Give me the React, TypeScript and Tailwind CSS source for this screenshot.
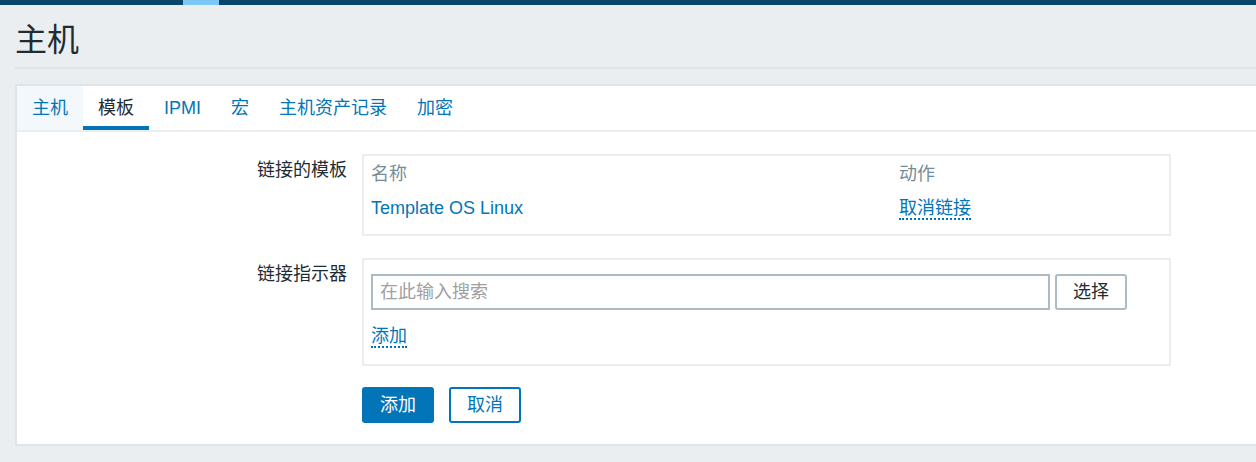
import React from "react";

const FONT = '"Liberation Sans", Arial, "Noto Sans CJK SC", sans-serif';

function Tab({ label, active, first }: { label: string; active?: boolean; first?: boolean }) {
  return (
    <div
      className={
        "h-[44px] px-[15px] flex items-center text-[18px] leading-[22px] " +
        (active
          ? "text-[#1f2c33] border-b-4 border-[#0275b8] pt-[4px]"
          : "text-[#0275b8]") +
        (first ? " bg-[#f3f8fd]" : "")
      }
    >
      {label}
    </div>
  );
}

export default function App() {
  return (
    <div className="w-[1256px] h-[462px] bg-[#ebeef0] overflow-hidden" style={{ fontFamily: FONT }}>
      <div className="h-[5px] bg-[#0a466a] flex">
        <div className="ml-[183px] w-[36px] h-full bg-[#7cc7f5]" />
      </div>
      <div className="ml-[15px] border-b-2 border-[#dfe4e7] pt-[19px] pb-[11px]">
        <h1 className="text-[32px] leading-[32px] text-[#1f2c33] font-normal">主机</h1>
      </div>
      <div className="mt-[15px] ml-[15px] border-2 border-r-0 border-[#dfe4e7] bg-white">
        <div className="flex border-b-2 border-[#ebeef0]">
          <Tab label="主机" first />
          <Tab label="模板" active />
          <Tab label="IPMI" />
          <Tab label="宏" />
          <Tab label="主机资产记录" />
          <Tab label="加密" />
        </div>
        <div className="pt-[22px] pb-[21px] text-[18px] leading-[22px] text-[#1f2c33]">
          <div className="flex">
            <div className="w-[330px] text-right pt-[5px] pr-0">链接的模板</div>
            <div className="ml-[15px] w-[809px] border-2 border-[#ebeef0] pt-[7px] pb-[15px] px-[7px]">
              <div className="flex h-[22px] text-[#768d99]">
                <div className="w-[528px]">名称</div>
                <div>动作</div>
              </div>
              <div className="flex h-[22px] mt-[12px]">
                <div className="w-[528px] text-[#0275b8]">Template OS Linux</div>
                <div>
                  <span className="text-[#0275b8] border-b-2 border-dotted border-[#0275b8]">取消链接</span>
                </div>
              </div>
            </div>
          </div>
          <div className="flex mt-[22px]">
            <div className="w-[330px] text-right pt-[5px]">链接指示器</div>
            <div className="ml-[15px] w-[809px] border-2 border-[#ebeef0] pt-[14px] pb-[17px] px-[7px]">
              <div className="flex h-[36px]">
                <input
                  className="w-[679px] h-[36px] border-2 border-[#acbbc4] px-[7px] text-[18px] text-[#1f2c33] placeholder:text-[#a0a0a0] outline-none"
                  style={{ fontFamily: FONT }}
                  placeholder="在此输入搜索"
                />
                <button
                  className="ml-[5px] w-[72px] h-[36px] border-2 border-[#acbbc4] rounded-[3px] bg-white text-[18px] text-[#1f2c33]"
                  style={{ fontFamily: FONT }}
                >
                  选择
                </button>
              </div>
              <div className="mt-[15px] h-[22px]">
                <span className="text-[#0275b8] border-b-2 border-dotted border-[#0275b8]">添加</span>
              </div>
            </div>
          </div>
          <div className="flex mt-[21px] ml-[345px] gap-[15px]">
            <button
              className="w-[72px] h-[36px] rounded-[3px] bg-[#0275b8] text-white text-[18px]"
              style={{ fontFamily: FONT }}
            >
              添加
            </button>
            <button
              className="w-[72px] h-[36px] rounded-[3px] border-2 border-[#0275b8] bg-white text-[#0275b8] text-[18px]"
              style={{ fontFamily: FONT }}
            >
              取消
            </button>
          </div>
        </div>
      </div>
    </div>
  );
}
